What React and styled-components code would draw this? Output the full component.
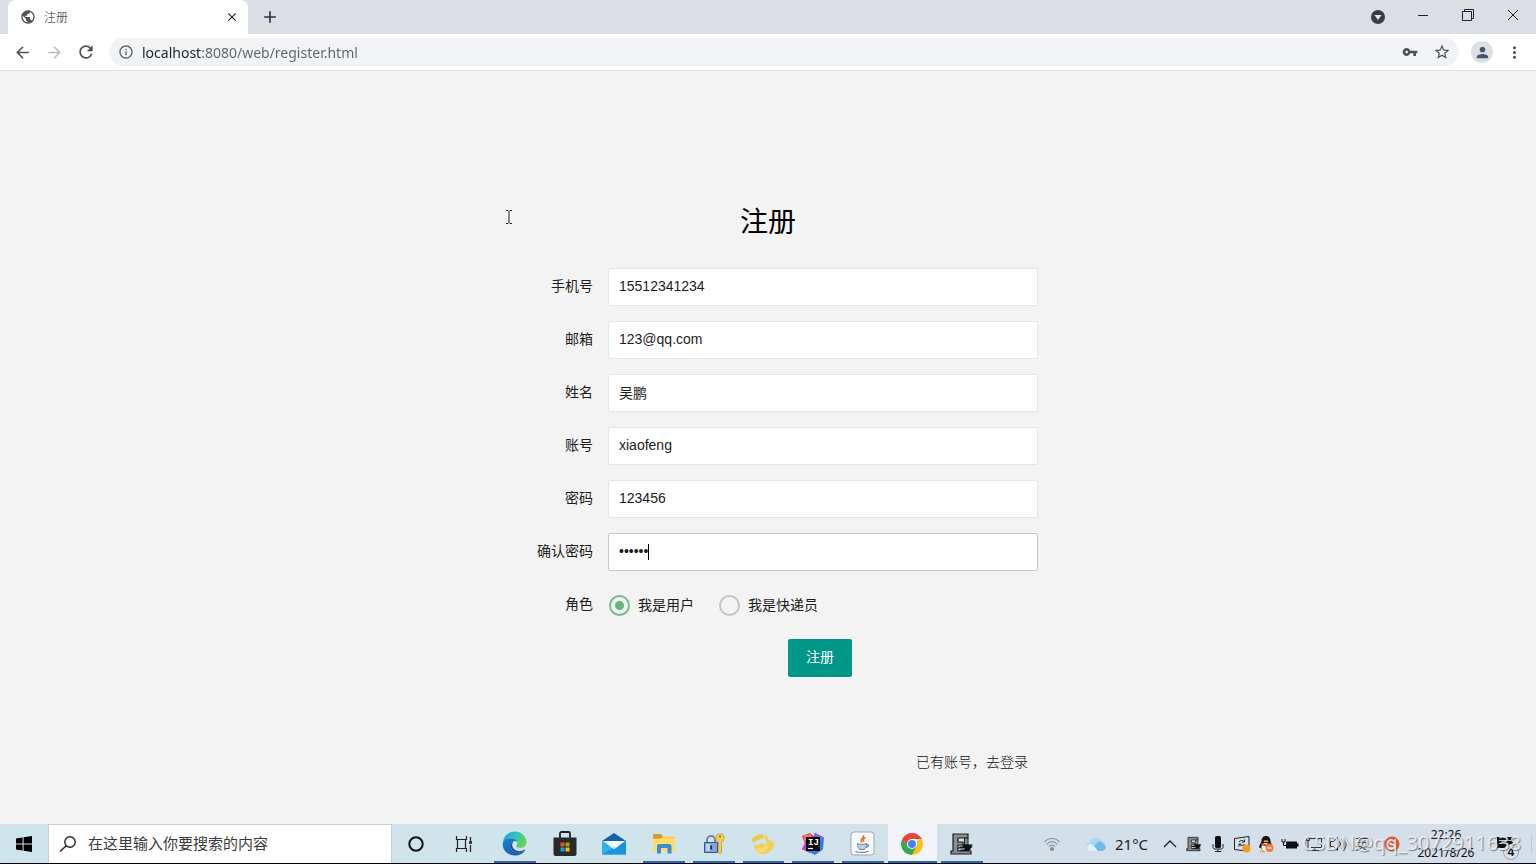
import React, { useState } from 'react';
import styled, { createGlobalStyle } from 'styled-components';
import {
    MdAdd,
    MdArrowBack,
    MdArrowForward,
    MdClose,
    MdInfoOutline,
    MdMoreVert,
    MdPerson,
    MdPublic,
    MdRefresh,
    MdStarBorder,
    MdVpnKey,
} from 'react-icons/md';

const GlobalStyle = createGlobalStyle`
    * {
        box-sizing: border-box;
    }

    body {
        margin: 0;
        font-family: "Noto Sans", "Noto Sans CJK SC", sans-serif;
    }

    button, input {
        font-family: inherit;
        margin: 0;
    }

    svg {
        display: block;
        flex: none;
    }
`;

const Screen = styled.div`
    display: flex;
    flex-direction: column;
    min-height: 100vh;
    background: #f3f3f3;
`;

/* browser */

const TabStrip = styled.div`
    display: flex;
    align-items: center;
    height: 34px;
    padding-left: 8px;
    background: #dbdfe4;
`;

const Tab = styled.div`
    display: flex;
    align-items: center;
    width: 240px;
    height: 34px;
    padding: 0 9px 0 12px;
    border-radius: 8px 8px 0 0;
    background: #fff;
    color: #4f5358;
`;

const TabTitle = styled.span`
    flex: 1;
    padding: 2px 0 0 8px;
    font-size: 12px;
    font-weight: 300;
    line-height: 16px;
    color: #202327;
`;

const IconButton = styled.button`
    display: flex;
    align-items: center;
    justify-content: center;
    flex: none;
    width: ${props => props.$width || 32}px;
    height: ${props => props.$height || 32}px;
    padding: 0;
    border: 0;
    background: none;
    color: ${props => props.$color || '#4d5156'};
`;

const TabSearch = styled(IconButton)`
    margin-left: auto;
`;

const WindowButtons = styled.div`
    display: flex;
    align-items: center;
    align-self: flex-start;
    height: 30px;
`;

const Toolbar = styled.div`
    display: flex;
    align-items: center;
    height: 37px;
    padding: 0 6px;
    border-bottom: 1px solid #dcdddf;
    background: #fff;
`;

const AddressBar = styled.label`
    display: flex;
    align-items: center;
    flex: 1;
    height: 28px;
    margin: 0 7px;
    padding: 0 1px 0 9px;
    border-radius: 14px;
    background: #f1f3f4;
    color: #5f6368;
`;

/* host is darker than the rest of the url */
const AddressInput = styled.input`
    flex: 1;
    min-width: 0;
    height: 24px;
    padding: 0 0 0 8px;
    border: 0;
    outline: 0;
    font-size: 14px;
    color: transparent;
    background: linear-gradient(90deg, #202124 68px, #5f6368 68px);
    background-clip: text;
`;

const Avatar = styled.span`
    display: flex;
    align-items: center;
    justify-content: center;
    width: 22px;
    height: 22px;
    border-radius: 50%;
    background: #dce0e5;
    color: #465568;
`;

/* register page */

const Page = styled.main`
    position: relative;
    display: flex;
    flex: 1;
    flex-direction: column;
    align-items: center;
    padding: 128px 16px 0;
`;

const Pointer = styled.svg`
    position: absolute;
    top: 139px;
    left: 505px;
`;

const RegisterForm = styled.form`
    display: flex;
    flex-direction: column;
    gap: 15px;
    width: 100%;
    max-width: 540px;
    font-size: 14px;
    line-height: 20px;
    color: #1c1c1c;
`;

const Title = styled.h1`
    margin: 0 0 10px;
    font-size: 28px;
    font-weight: 400;
    line-height: 44px;
    text-align: center;
    color: #000;
`;

const Row = styled.div`
    display: flex;
    align-items: center;
    height: 38px;
`;

const RowLabel = styled.label`
    flex: none;
    width: 110px;
    padding: 0 15px 2px 0;
    text-align: right;
`;

const Field = styled.div`
    position: relative;
    flex: 1;
`;

const TextInput = styled.input`
    display: block;
    width: 100%;
    height: 38px;
    padding: 0 10px 2px;
    border: 1px solid ${props => (props.$focused ? '#c8c8c8' : '#e6e6e6')};
    border-radius: 2px;
    outline: 0;
    background: #fff;
    font-family: "Liberation Sans", "Noto Sans CJK SC", sans-serif;
    font-size: 14px;
    color: #1c1c1c;
    caret-color: transparent;
`;

const Caret = styled.span`
    position: absolute;
    top: 11px;
    left: 40px;
    width: 1px;
    height: 16px;
    background: #000;
`;

const RadioLabel = styled.label`
    display: flex;
    align-items: center;
    gap: 8px;
    margin: 0 24px 0 1px;
`;

const Radio = styled.input`
    appearance: none;
    width: 21px;
    height: 21px;
    border: 2px solid #c6c6c6;
    border-radius: 50%;

    &:checked {
        border-color: #73bf88;
        background: radial-gradient(circle, #5fb878 4px, transparent 5px);
    }
`;

const Actions = styled.div`
    padding-left: 290px;
`;

const SubmitButton = styled.button`
    display: block;
    height: 38px;
    padding: 0 18px 4px;
    border: 0;
    border-radius: 2px;
    background: #009688;
    font-size: 14px;
    color: #fff;
`;

const LoginLine = styled.div`
    margin-top: 60px;
    padding-right: 10px;
    font-weight: 300;
    text-align: right;

    & > a {
        color: #111;
        text-decoration: none;
    }
`;

/* taskbar */

const TaskBar = styled.footer`
    position: relative;
    display: flex;
    align-items: stretch;
    height: 40px;
    border-bottom: 1px solid #000;
    background: linear-gradient(90deg, #cde4eb, #d0e4eb 45%, #d3dfe9 70%, #d5dfea);
`;

const SearchBox = styled.label`
    display: flex;
    align-items: center;
    width: 344px;
    padding-left: 10px;
    border: 1px solid #c9d0d3;
    border-bottom: 0;
    background: #fff;
`;

const SearchInput = styled.input`
    flex: 1;
    min-width: 0;
    padding: 0 0 2px 11px;
    border: 0;
    outline: 0;
    background: none;
    font-size: 15px;

    &::placeholder {
        color: #3a3a3a;
        opacity: 1;
    }
`;

const AppList = styled.div`
    display: grid;
    grid-template-columns: repeat(10, 1fr);
    width: 497px;
    margin-left: 2px;
`;

const AppButton = styled.button`
    position: relative;
    display: flex;
    align-items: center;
    justify-content: center;
    padding: 0;
    border: 0;
    background: ${props => (props.$active ? '#f0f4f9' : 'none')};
    box-shadow: ${props => (props.$active ? 'inset 0 -2px #2b66a8' : 'none')};

    &::after {
        content: "";
        position: absolute;
        bottom: 0;
        left: 4px;
        right: 4px;
        height: 2px;
        background: ${props => (props.$running ? '#2b66a8' : 'transparent')};
    }
`;

const Tray = styled.div`
    display: flex;
    align-items: center;
    margin-left: auto;
    padding-right: 4px;
`;

const TrayItem = styled.span`
    display: flex;
    justify-content: center;
    width: ${props => props.$width || 24}px;
`;

const Weather = styled.span`
    width: 44px;
    padding-left: 1px;
    font-size: 15px;
    line-height: 20px;
    color: #222;
`;

const Ime = styled.span`
    width: 24px;
    font-size: 14px;
    line-height: 20px;
    text-align: center;
    color: #444;
`;

const Clock = styled.time`
    width: 72px;
    font-size: 12px;
    line-height: 18px;
    text-align: center;
    white-space: nowrap;
    color: #111;
`;

const Notice = styled.div`
    position: relative;
    display: flex;
    justify-content: center;
    width: 50px;
    padding-right: 4px;
    border-right: 1px solid #bcc8d2;
`;

const Badge = styled.span`
    position: absolute;
    top: 8px;
    right: 12px;
    width: 16px;
    height: 16px;
    border: 1px solid #9aa4ad;
    border-radius: 50%;
    background: #d9e1ea;
    font-size: 12px;
    font-weight: 600;
    line-height: 14px;
    text-align: center;
    color: #111;
`;

const Watermark = styled.span`
    position: absolute;
    right: 15px;
    bottom: 7px;
    font-size: 20px;
    line-height: 26px;
    white-space: nowrap;
    color: rgba(245, 247, 250, 0.8);
    text-shadow: 1px 1px 1px rgba(60, 70, 80, 0.6);
    pointer-events: none;
`;

const WindowsIcon = () => (
    <svg width="18" height="18" viewBox="0 0 18 18">
        <path d="M1 3.4 7.6 2.5v6H1zM8.6 2.3 17 1v7.5H8.6zM1 9.5h6.6v6L1 14.6zM8.6 9.5H17V17l-8.4-1.3z" />
    </svg>
);

const SearchIcon = () => (
    <svg width="18" height="18" viewBox="0 0 18 18" fill="none" stroke="#222" strokeWidth="1.4">
        <circle cx="11" cy="7" r="5.2" />
        <path d="M7.2 10.8 1 16.6" />
    </svg>
);

const CortanaIcon = () => (
    <svg width="18" height="18" viewBox="0 0 18 18">
        <circle cx="9" cy="9" r="6.7" fill="none" stroke="#111" strokeWidth="2" />
    </svg>
);

const TaskViewIcon = () => (
    <svg width="18" height="18" viewBox="0 0 18 18" fill="none" stroke="#222" strokeWidth="1.2">
        <path d="M1.5 1v3.5h10V1M1.5 17v-3.5h10V17M2.5 4.5v9M10.5 4.5v9M15.5 2v4M15.5 10v7" />
        <path d="M14 7.5h3" strokeWidth="2.6" />
    </svg>
);

const EdgeIcon = () => (
    <svg width="25" height="25" viewBox="0 0 24 24">
        <defs>
            <linearGradient id="edgeTop" x1="0" y1="0" x2="1" y2="0.5">
                <stop offset="0" stopColor="#2098d8" />
                <stop offset="0.5" stopColor="#35c1c4" />
                <stop offset="1" stopColor="#62d452" />
            </linearGradient>
            <linearGradient id="edgeBody" x1="0" y1="0" x2="1" y2="1">
                <stop offset="0" stopColor="#1683d3" />
                <stop offset="1" stopColor="#1557a0" />
            </linearGradient>
        </defs>
        <path d="M1 11C1.5 4.5 6.5.5 12.3.5c6.4 0 11.2 4.7 11.2 10 0 3.3-2.6 5.7-5.8 5.7-2.7 0-4.2-.9-4.2-1.9 0-.8 1.3-1.3 1.3-3.2C14.8 8.6 12 7 8.8 7 5.5 7 2.5 8.5 1 11z" fill="url(#edgeTop)" />
        <path d="M.7 12.5C1 8.7 4.6 6.9 8.8 7c3.3.1 5.7 1.6 6 3.7-1-1-2.3-1.4-3.3-1-2 .8-3 2.6-3 5 0 3.5 2.8 6 6.4 6 2.6 0 5-1 6.6-2.6.4-.3.9.1.6.6-2.1 3.1-5.6 4.8-9.6 4.8C5.8 23.5.4 18.7.7 12.5z" fill="url(#edgeBody)" />
        <path d="M8.5 14.5c0-2.7 1.3-4.5 3-4.9-1.3 1-1.9 2.5-1.7 4.4.4 3 3.4 5.4 7 5.4 1.5 0 3-.4 4.7-1.3-1.7 1.7-4 2.7-6.600 2.7-3.600 0-6.400-2.600-6.400-6.300z" fill="#164a8e" />
    </svg>
);

const StoreIcon = () => (
    <svg width="24" height="26" viewBox="0 0 24 26">
        <path d="M7 8V2.5C7 1.7 7.6 1 8.5 1h7c.9 0 1.5.7 1.5 1.5V8" fill="none" stroke="#222" strokeWidth="1.8" />
        <path d="M.5 6.5h23V23a2 2 0 0 1-2 2h-19a2 2 0 0 1-2-2z" fill="#292929" />
        <path d="M7.5 11.5h4v4h-4z" fill="#f25022" />
        <path d="M12.5 11.5h4v4h-4z" fill="#7fba00" />
        <path d="M7.5 16.5h4v4h-4z" fill="#00a4ef" />
        <path d="M12.5 16.5h4v4h-4z" fill="#ffb900" />
    </svg>
);

const MailIcon = () => (
    <svg width="26" height="24" viewBox="0 0 26 24">
        <path d="M1 9 13 1l12 8v3H1z" fill="#1460ac" />
        <path d="M1 9h24v13.5H1z" fill="#2fb0ee" />
        <path d="M1 22.5 25 9v13.5z" fill="#1c93df" />
        <path d="M2 9h22l-8.5 6.5L13 17l-2.5-1.5z" fill="#f8fafc" />
        <path d="M13 17l2.5-1.5L13 14l-2.5 1.5z" fill="#cfdde8" />
    </svg>
);

const FolderIcon = () => (
    <svg width="24" height="22" viewBox="0 0 24 22">
        <path d="M1 2.5C1 1.7 1.6 1 2.5 1H9l2 2.5h10.5c.9 0 1.5.6 1.5 1.5v13H1z" fill="#f9ce55" />
        <path d="M1 2.5C1 1.7 1.6 1 2.5 1H9l2 2.5-2 2H1z" fill="#d9982a" />
        <path d="M1 6h22v12.5H1z" fill="#ffdc70" />
        <path d="M5 20.5V13c0-1.1.9-2 2-2h10.5c1.1 0 2 .9 2 2v7.5h-4V15H9v5.5z" fill="#3a90cf" />
    </svg>
);

const LockIcon = () => (
    <svg width="22" height="24" viewBox="0 0 22 24">
        <path d="M4 12V8a4 4 0 0 1 8 0v4" fill="none" stroke="#6f87a8" strokeWidth="2" />
        <path d="M1.5 10.5h13v10h-13z" fill="#7fa5dc" stroke="#35588f" />
        <path d="M3 12h4v7H3z" fill="#bcd3f2" />
        <path d="M7.3 13.5h1.8v4H7.3z" fill="#1d2f52" />
        <path d="M13 3.5 15 2h4l2 2v4l-2 2h-.5v10l-1.5 2-1.5-2V10H15l-2-2z" fill="#f3cd56" stroke="#c79c35" strokeWidth=".8" />
        <circle cx="17" cy="4.5" r="1" fill="#8b6718" />
    </svg>
);

const NavicatIcon = () => (
    <svg width="24" height="22" viewBox="0 0 24 22">
        <path d="M1 6.5C2.5 3 8 .8 12 1.200c1.500 2 .5 4.600-2.500 5.300C7 7 5 9 1.500 9 .7 8.300.6 7.300 1 6.500z" fill="#ecc94f" />
        <path d="M14.500 1.500c2 .5 1.500 2.500 2.500 4 1.500 2 4.500 2.500 6 5 .5 5-4 10-10 10.500-5.500.3-9.500-3-10.500-8 2-2 4.500-.5 7-2.500 2-1 3.500 1.500 5.500 1 2-.8.5-2.800-.5-4.500-1-1.800-1.500-4 0-5.500z" fill="#f1d05a" />
        <path d="M4 15.500c5 .8 10-1 13-4 1 4.500-4 8.500-9 8-1.800-.8-3.200-2.200-4-4z" fill="#f5da74" />
    </svg>
);

const IdeaIcon = () => (
    <svg width="24" height="24" viewBox="0 0 24 24">
        <path d="M1 4 9 1l6 5-6 15-8-4 3-5z" fill="#ee3168" />
        <path d="M1 17 5 9l5 4-1 8z" fill="#c93bd0" />
        <path d="m14 1 9 4.5-1 12L14 23 8 20z" fill="#277fe8" />
        <path d="m14 1 9 4.5-2 3-9-3z" fill="#7a64e8" />
        <path d="m3 3 8-1-3 6-5 1z" fill="#f47857" />
        <path d="M5 5h14v14H5z" fill="#0a0a0a" />
        <text x="7" y="13" fill="#fff" fontFamily="Liberation Mono, monospace" fontSize="9" fontWeight="700">IJ</text>
        <path d="M7 16.5h5" stroke="#fff" strokeWidth="1.2" />
    </svg>
);

const JavaIcon = () => (
    <svg width="25" height="25" viewBox="0 0 25 25">
        <rect x="1" y="1" width="23" height="23" rx="3" fill="#f6f8fa" stroke="#9ba7b0" />
        <path d="M13.5 4c1.5 2.5-4 3.5-1.8 7.5M15.5 6.5c-3 1.5-2.5 2.5-1.5 4.5" fill="none" stroke="#e0772a" strokeWidth="1.6" />
        <path d="M7.5 12.5c2.5 1.2 6.5 1.2 9 0 0 3-1 5.5-2.5 6h-4c-1.5-.5-2.5-3-2.5-6z" fill="#c3d0da" stroke="#6e8596" />
        <path d="M16.5 13.5c3-.5 2.5 2.5-.8 2.8M5.5 20.5c4 1.2 9 1.2 13-.3" fill="none" stroke="#6e8596" strokeWidth="1.2" />
    </svg>
);

const ChromeIcon = () => (
    <svg width="22" height="22" viewBox="0 0 22 22">
        <path d="M11 11 20.5 5.5A11 11 0 0 1 11 22z" fill="#fbc116" />
        <path d="m11 11 4.3 2.5L11 22A11 11 0 0 1 1.5 5.5l5.2 8z" fill="#34a853" />
        <path d="M11 6h9.8l-.3-.5a11 11 0 0 0-19 0L6.5 13z" fill="#ea4335" />
        <circle cx="11" cy="11" r="5" fill="#fff" />
        <circle cx="11" cy="11" r="4" fill="#4285f4" />
    </svg>
);

const RecorderIcon = ({ size }) => (
    <svg width={size} height={size} viewBox="0 0 24 24">
        <path d="M3 2h15v4H8v4h5v3H8v6h13v3H1v-3h2z" fill="#8a8e91" stroke="#1b1e20" strokeWidth="1.2" />
        <path d="M14.500 6H18v7h-3.500z" fill="#8a8e91" stroke="#1b1e20" />
        <path d="M12 12.500h11l-2 2h2l-3 2.500h1l-2 2H9l2-1.500h3l1-1H8l2-2h3z" fill="#101213" />
    </svg>
);

const WifiIcon = () => (
    <svg width="18" height="18" viewBox="0 0 18 18" fill="none" stroke="#8a9299" strokeWidth="1.2">
        <path d="M1.5 7c4-4.7 11-4.7 15 0M3.7 9.3c3-3.5 7.6-3.5 10.6 0M5.9 11.6c1.8-2 4.4-2 6.2 0" />
        <circle cx="9" cy="14" r="1.5" fill="#8a9299" />
    </svg>
);

const CloudIcon = () => (
    <svg width="22" height="16" viewBox="0 0 22 16">
        <path d="M5 15a4.3 4.3 0 0 1-.5-8.5C5.5 3 8.5 1 12 1.5c3 .3 4.5 2.5 5 4.7A4.5 4.5 0 0 1 16.5 15z" fill="#a6d8f5" />
        <path d="M10 15c-3-2-2-6 1-6.5C12.5 5 17 4.5 18.5 8c3.5 1 3 6.5-1.5 7z" fill="#6dbbec" />
        <path d="M5 15c-4-1-4.500-6 0-7 3 0 5 3 8 7z" fill="#dff2fc" />
    </svg>
);

const ChevronIcon = () => (
    <svg width="14" height="10" viewBox="0 0 14 10" fill="none" stroke="#222" strokeWidth="1.3">
        <path d="m1 8 6-6 6 6" />
    </svg>
);

const MicIcon = () => (
    <svg width="12" height="18" viewBox="0 0 12 18">
        <rect x="3" y="1" width="6" height="12" rx="1.5" fill="#111" />
        <path d="M1 9v3.5c0 1 1 1.5 2 1.5h6c1 0 2-.5 2-1.5V9M6 14v3M3 16.5h6" fill="none" stroke="#222" />
    </svg>
);

const UpdateIcon = () => (
    <svg width="18" height="18" viewBox="0 0 18 18" fill="none" stroke="#222">
        <path d="M1.5 3.5 16 1.5v12l-7 2-7.5-1z" />
        <path d="M6 7c1-2 4.5-2 5 0M11.5 4.5V7H9M11.5 9c-1 2-4.5 2-5 0M6 11.5V9h2.5" />
        <circle cx="13.5" cy="13.5" r="4" fill="#f49b1c" stroke="none" />
    </svg>
);

const QqIcon = () => (
    <svg width="16" height="18" viewBox="0 0 16 18">
        <path d="M8 1c3 0 4.5 2.3 4.5 5 0 1.5 2 3.5 2 6 0 1-.8 1-1.3.5C12.5 15 11 16 8 16s-4.5-1-5.2-3.5C2 13.5 1 13 1.3 11.5 1.5 9.5 3.5 7.5 3.5 6c0-2.7 1.5-5 4.5-5z" fill="#111" />
        <ellipse cx="7.5" cy="12" rx="4" ry="4" fill="#fff" />
        <path d="M3.5 8c3 1.5 6 1.5 9 0v2c-3 1.5-6 1.5-9 0z" fill="#e43b2f" />
        <ellipse cx="8" cy="6.2" rx="2.6" ry="1" fill="#f5a623" />
        <circle cx="11.5" cy="13" r="4" fill="#f47b3c" />
        <path d="M9.5 13h4" stroke="#fff" strokeWidth="1.3" />
        <path d="M2 16.5h5" stroke="#f5a623" strokeWidth="1.5" />
    </svg>
);

const BatteryIcon = () => (
    <svg width="18" height="12" viewBox="0 0 18 12">
        <path d="M5 3.5h11v7H5z" fill="#0d0d0d" />
        <path d="M16 5.5h1.5v3H16z" />
        <path d="M1 1v3h3V1M2.5 4v3.5H5" fill="none" stroke="#111" />
    </svg>
);

const DisplayIcon = () => (
    <svg width="18" height="16" viewBox="0 0 18 16" fill="none" stroke="#333">
        <path d="M5 2.5h11.5v9H6M10 11.5v3M7 14.5h7M1.5 1.5h3v3h-3zM3 4.5v10" />
    </svg>
);

const SpeakerIcon = () => (
    <svg width="18" height="16" viewBox="0 0 18 16" fill="none" stroke="#333">
        <path d="M1.5 5.5h3l4-4v13l-4-4h-3zM10.5 5.5c1.3 1.5 1.3 3.5 0 5M12.5 3.5c2.5 2.7 2.5 6.3 0 9M14.5 1.5c3.5 4 3.5 9 0 13" />
    </svg>
);

const SogouIcon = () => (
    <svg width="18" height="16" viewBox="0 0 18 16">
        <circle cx="9" cy="8" r="7.5" fill="#ee5428" />
        <text x="9" y="13" textAnchor="middle" fill="#fff" fontFamily="Liberation Sans, sans-serif" fontSize="13" fontWeight="700">S</text>
    </svg>
);

const NoticeIcon = () => (
    <svg width="18" height="16" viewBox="0 0 18 16">
        <path d="M1 1h16v11h-4l-3 3v-3H1z" fill="#111" />
        <path d="M3 4.5h12M3 7.5h9" stroke="#c8d1da" />
    </svg>
);

const TabSearchIcon = () => (
    <svg width="16" height="16" viewBox="0 0 16 16">
        <circle cx="8" cy="8" r="7" fill="#3a3e43" />
        <path d="M4.5 6h7L8 11z" fill="#e8eaed" />
    </svg>
);

const MinimizeIcon = () => (
    <svg width="12" height="12" viewBox="0 0 12 12" stroke="#222">
        <path d="M1 6.5h10" />
    </svg>
);

const RestoreIcon = () => (
    <svg width="12" height="12" viewBox="0 0 12 12" fill="none" stroke="#222">
        <path d="M.5 2.5h9v9h-9zM2.5 2.5v-2h9v9h-2" />
    </svg>
);

const CloseWindowIcon = () => (
    <svg width="12" height="12" viewBox="0 0 12 12" stroke="#222">
        <path d="m1 1 10 10M11 1 1 11" />
    </svg>
);

const fields = [
    { name: 'phone', label: '手机号', type: 'text', value: '15512341234' },
    { name: 'email', label: '邮箱', type: 'text', value: '123@qq.com' },
    { name: 'realName', label: '姓名', type: 'text', value: '吴鹏' },
    { name: 'account', label: '账号', type: 'text', value: 'xiaofeng' },
    { name: 'password', label: '密码', type: 'text', value: '123456' },
    { name: 'confirm', label: '确认密码', type: 'password', value: '123456', focused: true },
];

const apps = [
    { name: 'Edge', icon: <EdgeIcon />, running: true },
    { name: 'Store', icon: <StoreIcon /> },
    { name: 'Mail', icon: <MailIcon /> },
    { name: 'Explorer', icon: <FolderIcon />, running: true },
    { name: 'Keys', icon: <LockIcon />, running: true },
    { name: 'Navicat', icon: <NavicatIcon />, running: true },
    { name: 'IDEA', icon: <IdeaIcon />, running: true },
    { name: 'Java', icon: <JavaIcon />, running: true },
    { name: 'Chrome', icon: <ChromeIcon />, active: true },
    { name: 'Recorder', icon: <RecorderIcon size={24} />, running: true },
];

const Browser = () => (
    <header>
        <TabStrip>
            <Tab>
                <MdPublic size={16} />
                <TabTitle>注册</TabTitle>
                <IconButton $width={14} $height={20} $color="#222" aria-label="关闭标签页">
                    <MdClose size={14} />
                </IconButton>
            </Tab>
            <IconButton $width={44} $color="#333" aria-label="新标签页">
                <MdAdd size={20} />
            </IconButton>
            <TabSearch $width={45} aria-label="搜索标签页"><TabSearchIcon /></TabSearch>
            <WindowButtons>
                <IconButton $width={45} $height={30} aria-label="最小化"><MinimizeIcon /></IconButton>
                <IconButton $width={45} $height={30} aria-label="还原"><RestoreIcon /></IconButton>
                <IconButton $width={46} $height={30} aria-label="关闭"><CloseWindowIcon /></IconButton>
            </WindowButtons>
        </TabStrip>
        <Toolbar>
            <IconButton aria-label="后退"><MdArrowBack size={19} /></IconButton>
            <IconButton $color="#bdbfc2" aria-label="前进"><MdArrowForward size={19} /></IconButton>
            <IconButton aria-label="刷新"><MdRefresh size={20} /></IconButton>
            <AddressBar>
                <MdInfoOutline size={16} />
                <AddressInput aria-label="地址栏" defaultValue="localhost:8080/web/register.html" />
                <IconButton aria-label="密码"><MdVpnKey size={16} /></IconButton>
                <IconButton aria-label="收藏"><MdStarBorder size={18} /></IconButton>
            </AddressBar>
            <IconButton aria-label="用户"><Avatar><MdPerson size={17} /></Avatar></IconButton>
            <IconButton aria-label="菜单"><MdMoreVert size={19} /></IconButton>
        </Toolbar>
    </header>
);

const Register = () => {
    const [role, setRole] = useState('user');
    const onChangeRole = e => setRole(e.target.value);
    return (
        <Page>
            <Pointer width="8" height="14" viewBox="0 0 8 14" fill="none" stroke="#222">
                <path d="M1 .5h2l1 1 1-1h2M4 1.5v11M1 13.5h2l1-1 1 1h2" />
            </Pointer>
            <RegisterForm onSubmit={e => e.preventDefault()}>
                <Title>注册</Title>
                {fields.map(field => (
                    <Row key={field.name}>
                        <RowLabel htmlFor={field.name}>{field.label}</RowLabel>
                        <Field>
                            <TextInput
                                id={field.name}
                                type={field.type}
                                defaultValue={field.value}
                                $focused={field.focused}
                            />
                            {field.focused && <Caret />}
                        </Field>
                    </Row>
                ))}
                <Row role="radiogroup" aria-label="角色">
                    <RowLabel as="span">角色</RowLabel>
                    <RadioLabel>
                        <Radio type="radio" name="role" value="user" checked={role === 'user'} onChange={onChangeRole} />
                        我是用户
                    </RadioLabel>
                    <RadioLabel>
                        <Radio type="radio" name="role" value="courier" checked={role === 'courier'} onChange={onChangeRole} />
                        我是快递员
                    </RadioLabel>
                </Row>
                <Actions>
                    <SubmitButton type="submit">注册</SubmitButton>
                </Actions>
                <LoginLine>
                    <a href="#login">已有账号，去登录</a>
                </LoginLine>
            </RegisterForm>
        </Page>
    );
};

const Desktop = () => (
    <TaskBar>
        <IconButton $width={48} $height={39} $color="#000" aria-label="开始"><WindowsIcon /></IconButton>
        <SearchBox>
            <SearchIcon />
            <SearchInput aria-label="搜索" placeholder="在这里输入你要搜索的内容" />
        </SearchBox>
        <IconButton $width={48} $height={39} aria-label="Cortana"><CortanaIcon /></IconButton>
        <IconButton $width={48} $height={39} aria-label="任务视图"><TaskViewIcon /></IconButton>
        <AppList>
            {apps.map(app => (
                <AppButton key={app.name} $active={app.active} $running={app.running} aria-label={app.name}>
                    {app.icon}
                </AppButton>
            ))}
        </AppList>
        <Tray>
            <TrayItem $width={52}><WifiIcon /></TrayItem>
            <TrayItem $width={36}><CloudIcon /></TrayItem>
            <Weather>21°C</Weather>
            <TrayItem><ChevronIcon /></TrayItem>
            <TrayItem><RecorderIcon size={16} /></TrayItem>
            <TrayItem><MicIcon /></TrayItem>
            <TrayItem><UpdateIcon /></TrayItem>
            <TrayItem><QqIcon /></TrayItem>
            <TrayItem><BatteryIcon /></TrayItem>
            <TrayItem><DisplayIcon /></TrayItem>
            <TrayItem><SpeakerIcon /></TrayItem>
            <Ime>英</Ime>
            <TrayItem $width={36}><SogouIcon /></TrayItem>
            <Clock>
                22:26
                <br />
                2021/8/26
            </Clock>
            <Notice>
                <NoticeIcon />
                <Badge>4</Badge>
            </Notice>
        </Tray>
        <Watermark>CSDN@qq_3072911638</Watermark>
    </TaskBar>
);

const App = () => (
    <Screen>
        <GlobalStyle />
        <Browser />
        <Register />
        <Desktop />
    </Screen>
);

export default App;
